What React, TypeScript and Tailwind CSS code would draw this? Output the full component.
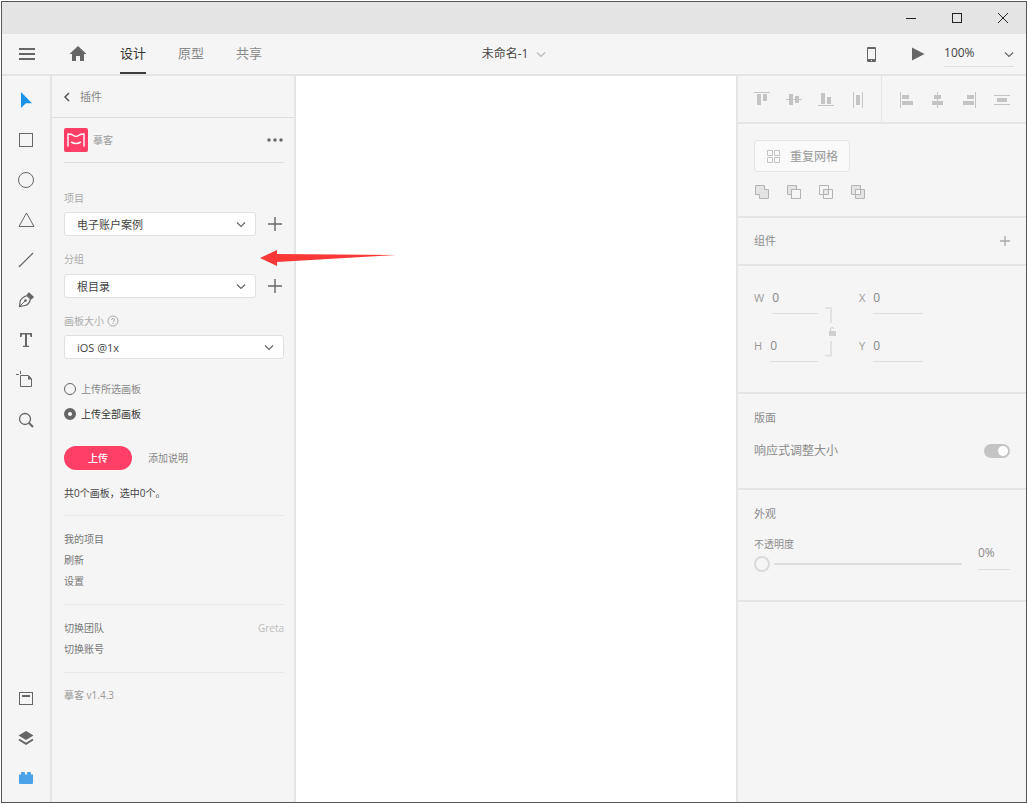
import { useState } from 'react';
import type { ReactNode } from 'react';

const Icon = ({ size = 16, className = '', children }: { size?: number; className?: string; children: ReactNode }) => (
  <svg width={size} height={size} viewBox={`0 0 ${size} ${size}`} fill="none" className={`shrink-0 ${className}`} aria-hidden="true">
    {children}
  </svg>
);

const Chevron = ({ className = '' }: { className?: string }) => (
  <Icon size={10} className={className}>
    <path d="M1 3.5l4 4 4-4" stroke="currentColor" strokeWidth="1.2" />
  </Icon>
);

const Plus = ({ size }: { size: number }) => (
  <Icon size={size}>
    <path d={`M${size / 2} 0V${size}M0 ${size / 2}H${size}`} stroke="currentColor" strokeWidth="1.4" />
  </Icon>
);

const DRAW_TOOLS = [
  {
    name: '选择',
    icon: <path d="M3 0v16l4.8-4.8H14z" fill="#1b92e6" />,
  },
  {
    name: '矩形',
    icon: <rect x="1.5" y="1.5" width="13" height="13" stroke="currentColor" />,
  },
  {
    name: '椭圆',
    icon: <circle cx="8" cy="8" r="7.5" stroke="currentColor" />,
  },
  {
    name: '多边形',
    icon: <path d="M8.5 1L16 14.5H1z" stroke="currentColor" />,
  },
  {
    name: '直线',
    icon: <path d="M1 15L15 1" stroke="currentColor" strokeWidth="1.2" />,
  },
  {
    name: '钢笔',
    icon: (
      <>
        <path d="M1.5 14.5L2.2 9C3 6.5 5.500 5 9 3.500L12.500 7C11.500 11 9.500 13 7 13.500z" stroke="currentColor" strokeWidth="1.2" />
        <path d="M1.5 14.5L7 9" stroke="currentColor" />
        <circle cx="7.5" cy="8.5" r="1.3" fill="currentColor" />
        <path d="M8.7 2.5L11 .3l5 4.700-2.500 2.500z" fill="currentColor" />
      </>
    ),
  },
  {
    name: '文本',
    icon: <path d="M2 1h12v4h-1.500l-.5-2.500H9v11.300h2V15H5v-1.200h2V2.500H4L3.500 5H2z" fill="currentColor" />,
  },
  {
    name: '画板',
    icon: (
      <>
        <path d="M2.5 3.5h8l3 3v8h-11z" stroke="currentColor" />
        <path d="M10 3.500l4 4h-4z" fill="currentColor" />
        <path d="M2.5-1v3M-2 2.500h3" stroke="currentColor" />
      </>
    ),
  },
  {
    name: '缩放',
    icon: (
      <>
        <circle cx="7" cy="7" r="5.5" stroke="currentColor" strokeWidth="1.3" />
        <path d="M10.8 10.8L15 15" stroke="currentColor" strokeWidth="2" />
      </>
    ),
  },
];

const PANEL_TOOLS = [
  {
    name: '资源',
    icon: (
      <>
        <rect x="1.5" y="2.5" width="13" height="12" stroke="currentColor" />
        <path d="M4 6h8" stroke="currentColor" strokeWidth="2" />
      </>
    ),
  },
  {
    name: '图层',
    icon: (
      <>
        <path d="M8 1l7.5 4.500L8 10 .5 5.500z" fill="currentColor" />
        <path d="M1 9.500l7 4.300 7-4.300" stroke="currentColor" strokeWidth="2" />
      </>
    ),
  },
  {
    name: '插件',
    icon: <path d="M1 4.500h2V3q0-1 1-1h2q1 0 1 1v1.500h2V3q0-1 1-1h2q1 0 1 1v1.500h2V13q0 1-1 1H2q-1 0-1-1z" fill="#4aa3e8" />,
  },
];

const ALIGN_VERTICAL = [
  {
    name: '顶端对齐',
    line: 'M0 .5h16',
    bars: 'M3 2h4v11H3zM9 2h4v7H9z',
  },
  {
    name: '垂直居中',
    line: 'M0 7.5h16',
    bars: 'M3 2h4v11H3zM9 4h4v7H9z',
  },
  {
    name: '底端对齐',
    line: 'M0 13.5h16',
    bars: 'M3 1h4v11H3zM9 5h4v7H9z',
  },
  {
    name: '水平分布',
    line: 'M3.5 0v16M12.5 0v16',
    bars: 'M6 3h4v10H6z',
  },
];

const ALIGN_HORIZONTAL = [
  {
    name: '左对齐',
    line: 'M2.5 0v16',
    bars: 'M4 3h7v4H4zM4 9h11v4H4z',
  },
  {
    name: '水平居中',
    line: 'M7.5 0v16',
    bars: 'M4 3h7v4H4zM2 9h11v4H2z',
  },
  {
    name: '右对齐',
    line: 'M13.5 0v16',
    bars: 'M5 3h7v4H5zM1 9h11v4H1z',
  },
  {
    name: '垂直分布',
    line: 'M0 3.5h16M0 12.5h16',
    bars: 'M3 6h10v4H3z',
  },
];

const BOOLEAN_OPS = [
  {
    name: '添加',
    icon: <path d="M1.5 1.5h9v4h4v9h-9v-4h-4z" fill="#e4e4e4" stroke="currentColor" />,
  },
  {
    name: '减去',
    icon: (
      <>
        <path d="M1.5 1.5h9v4h-5v5h-4z" fill="#e4e4e4" stroke="currentColor" />
        <rect x="5.5" y="5.5" width="9" height="9" stroke="currentColor" />
      </>
    ),
  },
  {
    name: '交叉',
    icon: (
      <>
        <rect x="5.5" y="5.5" width="5" height="5" fill="#e4e4e4" />
        <path d="M1.5 1.5h9v9h-9zM5.5 5.5h9v9h-9z" stroke="currentColor" />
      </>
    ),
  },
  {
    name: '排除重叠',
    icon: (
      <path d="M1.5 1.5h9v9h-9zM5.5 5.5h9v9h-9z" fill="#e4e4e4" fillRule="evenodd" stroke="currentColor" />
    ),
  },
];

const TitleBar = () => (
  <div className="flex h-8 justify-end bg-[#e4e4e4] text-[#222]">
    <button aria-label="最小化" className="flex w-[46px] items-center justify-center">
      <Icon size={12}><path d="M1 6.5h10" stroke="currentColor" /></Icon>
    </button>
    <button aria-label="最大化" className="flex w-[46px] items-center justify-center">
      <Icon size={12}><rect x="1.5" y="1.5" width="9" height="9" stroke="currentColor" /></Icon>
    </button>
    <button aria-label="关闭" className="flex w-[46px] items-center justify-center">
      <Icon size={12}><path d="M1 1l10 10M11 1L1 11" stroke="currentColor" /></Icon>
    </button>
  </div>
);

const MODES = ['设计', '原型', '共享'];

const Header = () => {
  const [mode, setMode] = useState('设计');

  return (
    <header className="flex h-[42px] border-b-2 border-[#e4e4e4] text-[#666]">
      <div className="flex flex-1 items-stretch pl-3">
        <button aria-label="菜单" className="mr-8 ml-1">
          <Icon size={18}><path d="M1 4h16M1 9h16M1 14h16" stroke="currentColor" strokeWidth="2" /></Icon>
        </button>
        <button aria-label="主页" className="mr-[34px]">
          <Icon size={18}>
            <path d="M10 1l8.500 8H16v7h-4v-5H8v5H4V9H1.500z" fill="currentColor" />
          </Icon>
        </button>
        <nav className="flex gap-8">
          {MODES.map((m) => (
            <button
              key={m}
              onClick={() => setMode(m)}
              className={`border-b-2 pt-0.5 text-[13px] ${m === mode ? 'border-[#3c3c3c] text-[#333]' : 'border-transparent text-[#8a8a8a]'}`}
            >
              {m}
            </button>
          ))}
        </nav>
      </div>
      <button className="flex items-center gap-2 text-xs text-[#444]">
        未命名-1
        <Chevron className="text-[#bbb]" />
      </button>
      <div className="flex flex-1 items-center justify-end pr-3">
        <button aria-label="设备预览" className="mr-[30px]">
          <Icon>
            <path d="M3 2q0-1 1-1h7q1 0 1 1v13q0 1-1 1H4q-1 0-1-1zM4 3v10h7V3zM7 14v1h1v-1z" fill="currentColor" fillRule="evenodd" />
          </Icon>
        </button>
        <button aria-label="桌面预览" className="mr-[18px]">
          <Icon><path d="M2 1.5v13L14.500 8z" fill="currentColor" /></Icon>
        </button>
        <div className="grid w-[70px] items-center border-b border-[#e0e0e0]">
          <select aria-label="缩放比例" className="col-start-1 row-start-1 h-6 appearance-none pb-0.5 text-xs text-[#444]">
            <option>100%</option>
          </select>
          <Chevron className="pointer-events-none col-start-1 row-start-1 justify-self-end" />
        </div>
      </div>
    </header>
  );
};

const Toolbar = () => (
  <aside className="flex w-[50px] shrink-0 flex-col justify-between border-r-2 border-[#e4e4e4] py-1 text-[#666]">
    <div className="flex flex-col">
      {DRAW_TOOLS.map(({ name, icon }) => (
        <button key={name} aria-label={name} className="flex h-10 items-center justify-center">
          <Icon className="overflow-visible">{icon}</Icon>
        </button>
      ))}
    </div>
    <div className="flex flex-col">
      {PANEL_TOOLS.map(({ name, icon }) => (
        <button key={name} aria-label={name} className="flex h-10 items-center justify-center">
          <Icon>{icon}</Icon>
        </button>
      ))}
    </div>
  </aside>
);

const SelectBox = ({ id, value }: { id: string; value: string }) => (
  <div className="grid flex-1 items-center">
    <select
      id={id}
      className="col-start-1 row-start-1 h-6 appearance-none rounded-[3px] border border-[#e0e0e0] bg-white px-3 pt-0.5 text-[11px] text-[#444]"
    >
      <option>{value}</option>
    </select>
    <Chevron className="pointer-events-none col-start-1 row-start-1 mr-2.5 justify-self-end text-[#666]" />
  </div>
);

const PluginPanel = () => {
  const [scope, setScope] = useState('all');

  return (
    <section className="w-[244px] shrink-0 border-r-2 border-[#e4e4e4] text-[10px] leading-4 text-[#777]">
      <div className="flex h-[42px] items-center gap-2 border-b border-[#dedede] pl-2.5 text-[11px] text-[#888]">
        <button aria-label="返回">
          <Icon size={10}><path d="M7 1L3 5l4 4" stroke="#555" strokeWidth="1.5" /></Icon>
        </button>
        <h2>插件</h2>
      </div>

      <div className="pt-2.5 pr-2.5 pl-3">
        <div className="flex h-[35px] items-start border-b border-[#dedede] text-[#999]">
          <div className="flex flex-1 items-center gap-[5px]">
            <Icon size={24}>
              <rect width="24" height="24" rx="2" fill="#ff3f66" />
              <path d="M4 18.500V6q3.500 0 5 1.200t3 1.200 3-1.200 5-1.200v12.500" stroke="#fff" strokeWidth="1.4" />
              <path d="M7 14q5 3 10 0" stroke="#fff" strokeWidth="1.5" />
            </Icon>
            摹客
          </div>
          <button aria-label="更多" className="flex h-6 items-center">
            <Icon size={18}>
              <g fill="#666">
                <circle cx="3" cy="9" r="1.7" />
                <circle cx="9" cy="9" r="1.7" />
                <circle cx="15" cy="9" r="1.7" />
              </g>
            </Icon>
          </button>
        </div>

        <div className="mt-[27px] text-[#aaa]">
          <label htmlFor="project">项目</label>
          <div className="mt-1.5 flex items-center text-[#666]">
            <SelectBox id="project" value="电子账户案例" />
            <button aria-label="新建项目" className="mr-0.5 ml-3"><Plus size={14} /></button>
          </div>
          <label htmlFor="group" className="mt-[15px] block">分组</label>
          <div className="mt-[7px] flex items-center text-[#666]">
            <SelectBox id="group" value="根目录" />
            <button aria-label="新建分组" className="mr-0.5 ml-3"><Plus size={14} /></button>
          </div>
          <label htmlFor="artboard" className="mt-[15px] flex items-center gap-[3px]">
            画板大小
            <Icon size={12}>
              <circle cx="6" cy="6" r="5" stroke="currentColor" />
              <path d="M4.500 5q0-1.500 1.500-1.500T7.500 5Q7.500 5.700 6 6.700M6 8v1" stroke="currentColor" />
            </Icon>
          </label>
          <div className="mt-1.5 flex">
            <SelectBox id="artboard" value="iOS @1x" />
          </div>
        </div>

        <div className="mt-[22px] flex flex-col gap-[9px]">
          {[
            { id: 'selected', label: '上传所选画板' },
            { id: 'all', label: '上传全部画板' },
          ].map(({ id, label }) => (
            <label key={id} className={`flex items-center gap-[5px] ${scope === id ? 'text-[#333]' : 'text-[#888]'}`}>
              <input
                type="radio"
                name="scope"
                checked={scope === id}
                onChange={() => setScope(id)}
                className="size-3 appearance-none rounded-full border border-[#666] checked:border-4 checked:bg-white"
              />
              {label}
            </label>
          ))}
        </div>

        <div className="mt-6 flex items-center gap-4 text-[#888]">
          <button className="h-6 w-[68px] rounded-full bg-[#ff3f66] font-medium text-white">上传</button>
          <button>添加说明</button>
        </div>
        <p className="mt-[15px] border-b border-[#e8e8e8] pb-[14px] text-[#444]">共0个画板，选中0个。</p>

        <div className="flex flex-col items-start gap-[5px] border-b border-[#e8e8e8] py-[15px]">
          <button>我的项目</button>
          <button>刷新</button>
          <button>设置</button>
        </div>

        <div className="flex flex-col gap-[5px] border-b border-[#e8e8e8] py-[15px]">
          <div className="flex justify-between">
            <button>切换团队</button>
            <span className="text-[#bbb]">Greta</span>
          </div>
          <button className="self-start">切换账号</button>
        </div>
        <p className="pt-[14px] text-[#999]">摹客 v1.4.3</p>
      </div>
    </section>
  );
};

const Field = ({ label }: { label: string }) => (
  <label className="flex h-8 gap-2">
    <span className="pt-2 text-[11px] leading-4 text-[#999]">{label}</span>
    <input defaultValue="0" className="h-full min-w-0 flex-1 border-b border-[#dedede] text-xs text-[#888]" />
  </label>
);

const AlignButtons = ({ items }: { items: { name: string; line: string; bars: string }[] }) => (
  <>
    {items.map(({ name, line, bars }) => (
      <button key={name} aria-label={name} className="size-4">
        <Icon>
          <path d={line} stroke="currentColor" />
          <path d={bars} fill="currentColor" />
        </Icon>
      </button>
    ))}
  </>
);

const Inspector = () => (
  <aside className="w-[290px] shrink-0 border-l-2 border-[#e4e4e4] text-[#8c8c8c]">
    <div className="flex h-12 border-b-2 border-[#e4e4e4] text-[#c4c4c4]">
      <div className="flex w-36 gap-4 border-r border-[#e4e4e4] pt-4 pl-4">
        <AlignButtons items={ALIGN_VERTICAL} />
      </div>
      <div className="flex gap-4 pt-4 pl-4">
        <AlignButtons items={ALIGN_HORIZONTAL} />
      </div>
    </div>

    <div className="border-b-2 border-[#e4e4e4] p-4">
      <button className="flex h-8 items-center gap-2 rounded-[3px] border border-[#e4e4e4] bg-[#fafafa] px-[11px] pt-px text-xs text-[#999]">
        <Icon>
          <path d="M1.5 1.5h5v5h-5zM8.5 1.5h5v5h-5zM1.5 8.5h5v5h-5zM8.5 8.5h5v5h-5z" stroke="#c4c4c4" />
        </Icon>
        重复网格
      </button>
      <div className="mt-3 flex gap-4 text-[#b4b4b4]">
        {BOOLEAN_OPS.map(({ name, icon }) => (
          <button key={name} aria-label={name} className="size-4">
            <Icon>{icon}</Icon>
          </button>
        ))}
      </div>
    </div>

    <div className="flex h-12 items-center justify-between border-b-2 border-[#e4e4e4] px-4">
      <h3 className="text-[11px]">组件</h3>
      <button aria-label="添加组件" className="text-[#aaa]"><Plus size={10} /></button>
    </div>

    <div className="flex h-32 border-b-2 border-[#e4e4e4] pt-4 pl-4">
      <div className="flex w-16 flex-col gap-4">
        <Field label="W" />
        <Field label="H" />
      </div>
      <button aria-label="锁定长宽比" className="mx-1.5 mt-6 h-[52px] w-3">
        <svg width="12" height="52" viewBox="0 0 12 52" fill="none" aria-hidden="true">
          <path d="M1 2h6v15M7 35v14.500H1" stroke="#e2e2e2" strokeWidth="2" />
          <path d="M5 25h7v5H5z" fill="#d0d0d0" />
          <path d="M6.500 25v-2q0-1.500 1.500-1.500t2 1.500" stroke="#d0d0d0" />
        </svg>
      </button>
      <div className="ml-[17px] flex w-16 flex-col gap-4">
        <Field label="X" />
        <Field label="Y" />
      </div>
    </div>

    <div className="h-24 border-b-2 border-[#e4e4e4] px-4 pt-4">
      <h3 className="text-[11px] leading-4">版面</h3>
      <label className="mt-[15px] flex items-center justify-between text-xs leading-5">
        响应式调整大小
        <input
          type="checkbox"
          defaultChecked
          className="flex h-3.5 w-[26px] appearance-none items-center rounded-full bg-[#c4c4c4] px-0.5 before:size-2.5 before:rounded-full before:bg-white checked:justify-end"
        />
      </label>
    </div>

    <div className="h-28 border-b-2 border-[#e4e4e4] px-4 pt-4">
      <h3 className="text-[11px] leading-4">外观</h3>
      <div className="mt-[14px] flex gap-4">
        <div className="flex-1">
          <label htmlFor="opacity" className="block text-[10px] leading-4">不透明度</label>
          <div className="mt-1 grid items-center">
            <input
              id="opacity"
              type="range"
              defaultValue={0}
              className="h-4 w-full appearance-none bg-[linear-gradient(#dedede,#dedede)] bg-[length:188px_2px] bg-right bg-no-repeat [&::-webkit-slider-thumb]:size-4 [&::-webkit-slider-thumb]:appearance-none [&::-webkit-slider-thumb]:rounded-full [&::-webkit-slider-thumb]:border-2 [&::-webkit-slider-thumb]:border-[#dadada] [&::-webkit-slider-thumb]:bg-[#f5f5f5]"
            />
          </div>
        </div>
        <input
          aria-label="不透明度数值"
          defaultValue="0%"
          className="mt-2 h-[26px] w-8 border-b border-[#dedede] pb-2 text-xs"
        />
      </div>
    </div>
  </aside>
);

// Red pointer drawn over the panel edge, aimed at the plugin form
const Pointer = () => (
  <svg width="138" height="18" viewBox="0 0 138 18" className="pointer-events-none absolute top-[173px] left-[258px]" aria-hidden="true">
    <path d="M0 9L17 1v4l119 1L17 13v4z" fill="#fb3838" />
  </svg>
);

const App = () => (
  <div className="flex min-h-screen bg-white p-px font-['Open_Sans','Noto_Sans_CJK_SC',sans-serif]">
    <div className="flex flex-1 flex-col border border-[#555] bg-[#f5f5f5]">
      <TitleBar />
      <Header />
      <div className="relative flex flex-1">
        <Toolbar />
        <PluginPanel />
        <main className="flex-1 bg-white" />
        <Inspector />
        <Pointer />
      </div>
    </div>
  </div>
);

export default App;
